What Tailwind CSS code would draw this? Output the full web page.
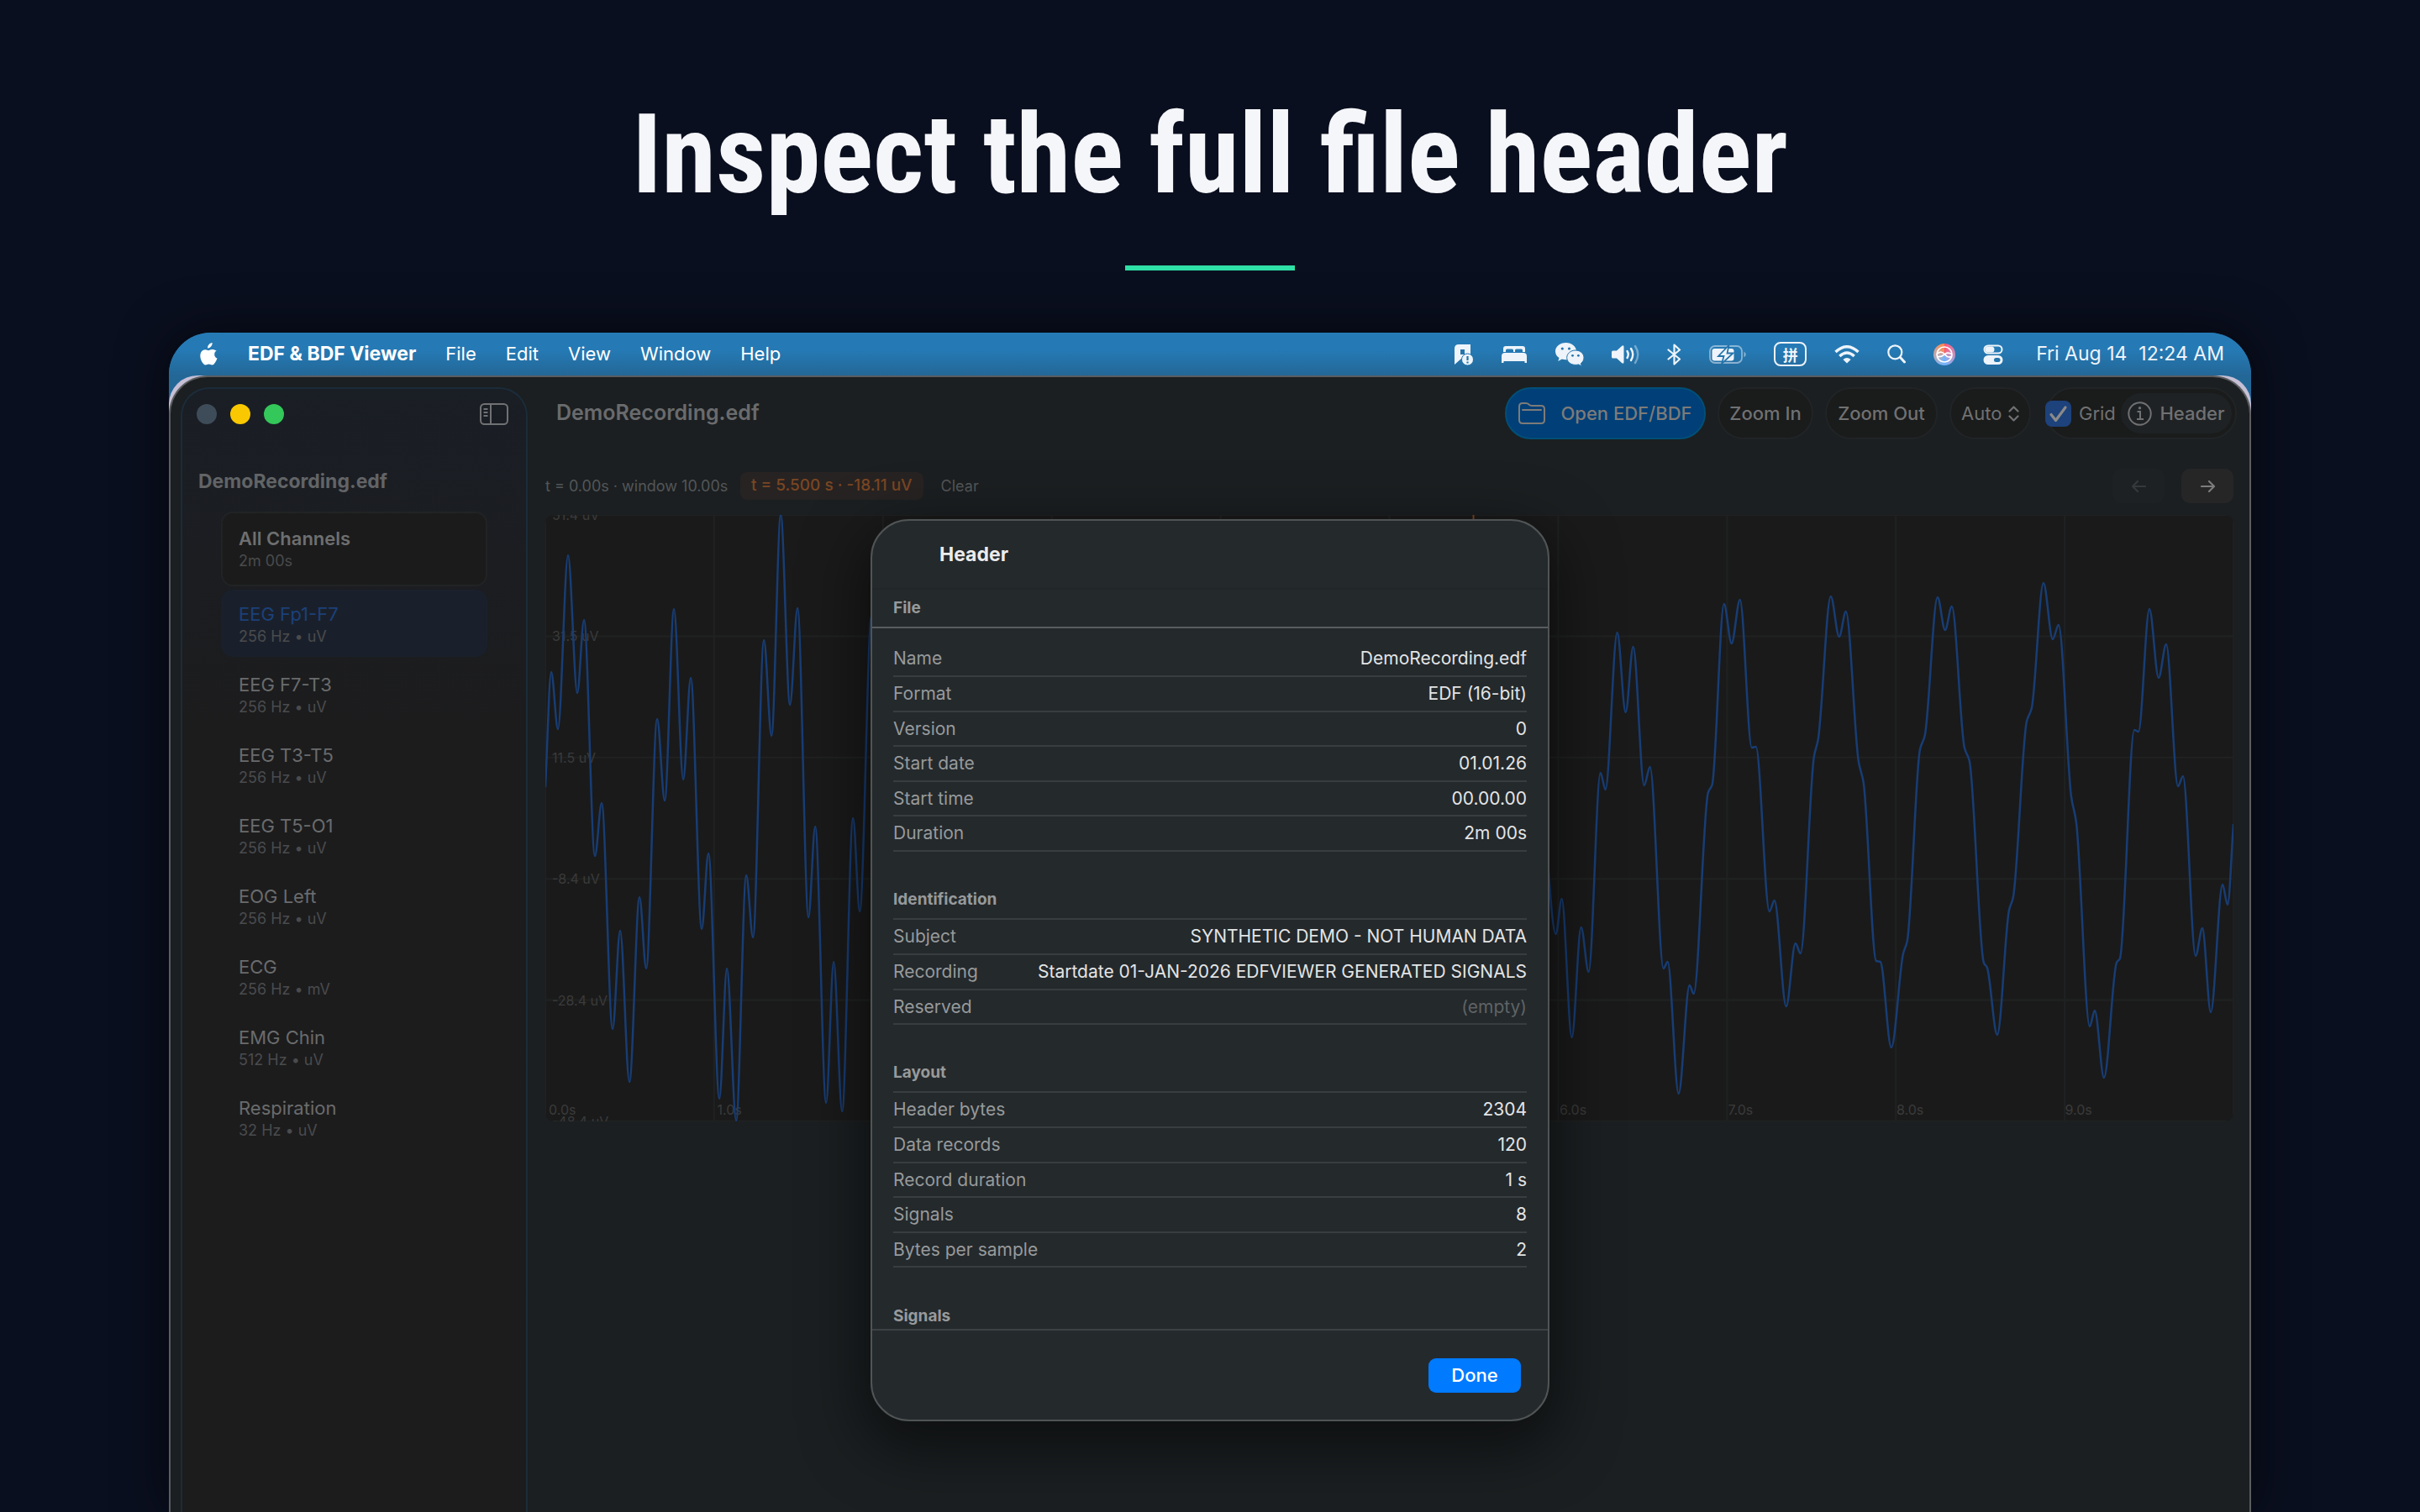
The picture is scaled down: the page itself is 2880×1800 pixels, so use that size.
<!DOCTYPE html>
<html lang="en">
  <head>
    <meta charset="UTF-8" />
    <meta name="viewport" content="width=device-width, initial-scale=1.0" />
    <title>EDF &amp; BDF Viewer</title>
    <script src="https://cdn.jsdelivr.net/npm/@tailwindcss/browser@4"></script>
  </head>
  <body
    class="bg-[#0a0f1f] font-['Inter','Noto_Sans_CJK_SC',sans-serif] h-screen overflow-hidden flex flex-col"
  >
    <!-- Headline -->
    <header class="h-[396px] shrink-0 flex flex-col items-center">
      <h1
        class="mt-[94px] h-[180px] flex items-center whitespace-nowrap font-['Roboto_Condensed','Roboto',sans-serif] font-bold text-[131px] text-[#f5f6fa]"
      >
        Inspect the full file header
      </h1>
      <div class="mt-[42px] w-[202px] h-[6px] bg-[#2ee0a5]"></div>
    </header>

    <!-- Desktop -->
    <div
      class="flex-1 min-h-0 mx-[201px] rounded-t-[50px] overflow-hidden bg-[#236797] shadow-[0_0_60px_rgba(0,0,0,0.6)] flex flex-col"
    >
      <!-- Menu bar -->
      <div
        class="h-[51px] shrink-0 flex items-center justify-between pl-9 pr-8 bg-linear-to-b from-[#257ab5] from-40% to-[#236797] text-[23px] text-white"
      >
        <nav class="flex items-center gap-[35px] text-[22px]">
          <svg class="w-[23px] h-[28px] fill-white" viewBox="0 0 23 28">
            <path d="M15.6 0c.2 1.700-.5 3.300-1.500 4.500-1 1.200-2.500 2-4 1.900-.2-1.600.6-3.200 1.500-4.200C12.600 1 14.300.1 15.600 0z" />
            <path d="M20.700 9.600c-1.600 1-2.500 2.500-2.500 4.300 0 2.100 1.200 3.900 3.300 4.700-.5 1.700-1.300 3.300-2.400 4.900-1 1.500-2.100 2.900-3.700 2.900-1.600 0-2.100-.9-3.900-.9-1.800 0-2.400.9-3.900 1-1.600 0-2.800-1.600-3.800-3.100C1.700 20.300.2 15.100 2.300 11.300 3.400 9.400 5.300 8.200 7.300 8.200c1.600 0 3 1 3.900 1s2.700-1.300 4.600-1.100c.8 0 3.300.3 4.900 1.500z" />
          </svg>
          <a href="#" class="text-[23px] font-bold">EDF &amp; BDF Viewer</a>
          <a href="#">File</a>
          <a href="#">Edit</a>
          <a href="#">View</a>
          <a href="#">Window</a>
          <a href="#">Help</a>
        </nav>
        <div class="flex items-center gap-[33px] text-[#eef4fa]">
          <svg class="w-[23px] h-[26px]" viewBox="0 0 23 26">
            <path d="M1 25V6Q1 1 6 1h14v12l-9 6-2-1z" fill="currentColor" />
            <path d="M8 7h5v6H8z" fill="#2574ab" />
            <circle cx="16.500" cy="19" r="7" fill="currentColor" stroke="#2574ab" />
            <path d="M16.500 15v5M16.500 21.500v2" stroke="#2574ab" stroke-width="2.200" />
          </svg>
          <svg class="w-[32px] h-[22px]" viewBox="0 0 32 22" fill="currentColor">
            <path d="M3 8V4q0-3 3-3h20q3 0 3 3v4h-3V6q0-1.500-1.500-1.500h-6Q17 4.500 17 6v2h-2V6q0-1.500-1.500-1.500h-6Q6 4.500 6 6v2z" />
            <path d="M1 21v-8q0-4 4-4h22q4 0 4 4v8h-2.500v-2h-25v2z" />
          </svg>
          <svg class="w-[34px] h-[28px]" viewBox="0 0 34 28">
            <path d="M12.500 0C5.600 0 0 4.500 0 10.200c0 3.200 1.700 6 4.500 7.900L3.300 22l4.500-2.400c1.500.4 3 .7 4.700.7C19.400 20.300 25 15.900 25 10.200S19.400 0 12.500 0z" fill="currentColor" />
            <path d="M24 9c-5.800 0-10.300 3.900-10.300 8.700S18.200 26.400 24 26.400c1.200 0 2.500-.2 3.600-.5l3.700 2-.9-3.300c2.200-1.600 3.600-4.100 3.600-6.900C34 12.900 29.700 9 24 9z" fill="currentColor" stroke="#2574ab" />
            <g fill="#2574ab">
              <circle cx="8.300" cy="7" r="1.600" /><circle cx="16.500" cy="7" r="1.600" />
              <circle cx="20.500" cy="15.300" r="1.400" /><circle cx="27.400" cy="15.300" r="1.400" />
            </g>
          </svg>
          <svg class="w-[33px] h-[24px]" viewBox="0 0 33 24" fill="none" stroke="currentColor" stroke-width="2.400" stroke-linecap="round">
            <path d="M0 9q0-1.500 1.500-1.500H6L12 2q2.500-2 2.500 1v18q0 3-2.500 1l-6-5.500H1.500Q0 16.500 0 15z" fill="currentColor" stroke="none" />
            <path d="M18.500 8q2.500 4 0 8" />
            <path d="M23 5q4.500 7 0 14" />
            <path d="M28 2q6.500 10 0 20" opacity=".4" />
          </svg>
          <svg class="w-[17px] h-[26px]" viewBox="0 0 17 26" fill="none" stroke="currentColor" stroke-width="2.200" stroke-linejoin="round" stroke-linecap="round">
            <path d="M1.500 7.500 15 18.500 8.500 24.500v-23L15 7.500 1.500 18.500" />
          </svg>
          <svg class="w-[44px] h-[22px]" viewBox="0 0 44 22">
            <rect x="1" y="1" width="38" height="20" rx="6" fill="none" stroke="currentColor" stroke-width="1.800" opacity=".5" />
            <path d="M41.500 7.500q4.500 3.500 0 7z" fill="currentColor" opacity=".5" />
            <rect x="3.500" y="4" width="26" height="14.500" rx="3" fill="currentColor" />
            <path d="M23.500 0 11 13h6.500L15 22 28.500 9.500h-7z" fill="currentColor" stroke="#2574ab" stroke-width="1.800" />
          </svg>
          <span
            class="w-[39px] h-[29px] flex items-center justify-center rounded-lg border-2 border-current text-[18px] leading-none font-bold font-['Noto_Sans_CJK_SC',sans-serif]"
            >拼</span
          >
          <svg class="w-[30px] h-[22px]" viewBox="0 0 30 22" fill="none" stroke="currentColor" stroke-width="3.400">
            <path d="M1.500 8q13.500-12.500 27 0" />
            <path d="M6.300 13q8.700-8 17.400 0" />
            <path d="M15 21.500l-4.600-4.600q4.600-4 9.200 0z" fill="currentColor" stroke="none" />
          </svg>
          <svg class="w-[22px] h-[23px]" viewBox="0 0 22 23" fill="none" stroke="currentColor" stroke-width="2.200" stroke-linecap="round">
            <circle cx="9.300" cy="9.300" r="8" />
            <path d="m15.500 15.500 5 5.500" stroke-width="3" />
          </svg>
          <span
            class="w-[26px] h-[26px] rounded-full bg-conic from-[#ff4f7a] via-[#6ab4ff] via-50% to-[#ff8a3c] flex items-center justify-center"
          >
            <svg class="w-[22px] h-[22px]" viewBox="0 0 22 22" fill="none" stroke="#fff" stroke-width="1.700">
              <circle cx="11" cy="11" r="9" />
              <path d="M2.500 10q5-4 9 1t8.500 2M2.500 13.500q5 1 8.500-2.500t8.500-.500" />
            </svg>
          </span>
          <svg class="w-[24px] h-[24px]" viewBox="0 0 24 24" fill="none" stroke="currentColor" stroke-width="2">
            <rect x="1.500" y="1.500" width="21" height="9" rx="4.500" />
            <rect x="3.500" y="3.500" width="9" height="5" rx="2.500" fill="currentColor" />
            <rect x="1.500" y="14" width="21" height="9" rx="4.500" fill="currentColor" />
            <rect x="13" y="16" width="7.500" height="5" rx="2.500" fill="#2574ab" stroke="none" />
          </svg>
          <p class="ml-1.5 flex gap-3.5"><span>Fri Aug 14</span><span>12:24 AM</span></p>
        </div>
      </div>

      <!-- Wallpaper, seen only in the window's corners -->
      <div class="flex-1 min-h-0 rounded-t-[34px] bg-[#c6bfd6] flex">
        <!-- App window -->
        <div
          class="relative flex-1 min-w-0 flex rounded-t-[46px] border-2 border-b-0 border-[#5a5c5e] bg-[#1b1f21]"
        >
          <!-- Sidebar -->
          <aside
            class="w-[413px] shrink-0 mt-3 ml-3 rounded-t-[34px] border-2 border-b-0 border-[#1b2c3a] bg-linear-to-b from-[#1a1e25] to-[#1c1c1d] to-30%"
          >
            <div class="h-[60px] pl-[17px] pr-[21px] flex items-center justify-between">
              <div class="flex gap-4">
                <button class="w-6 h-6 rounded-full bg-[#3d4c58]" aria-label="Close"></button>
                <button class="w-6 h-6 rounded-full bg-[#fac800]" aria-label="Minimize"></button>
                <button class="w-6 h-6 rounded-full bg-[#34c759]" aria-label="Zoom"></button>
              </div>
              <button aria-label="Toggle sidebar">
                <svg class="w-[34px] h-[26px]" viewBox="0 0 34 26" fill="none" stroke="#707173" stroke-width="2">
                  <rect x="1" y="1" width="32" height="24" rx="4.500" />
                  <path d="M13 1v24M4.500 7h5M4.500 11h5M4.500 15h5" />
                </svg>
              </button>
            </div>
            <h2 class="mt-9 pl-[19px] text-[23px] leading-7 font-bold text-[#626466]">
              DemoRecording.edf
            </h2>
            <ul id="channels" class="mt-[22px] mx-[46px] flex flex-col gap-1"></ul>
          </aside>

          <!-- Main column -->
          <main class="flex-1 min-w-0 mt-3 ml-[21px] mr-[19px]">
            <div class="h-[62px] -mr-1 pl-[13px] flex items-center justify-between text-[22px] text-[#707172]">
              <h1 class="text-[25px] font-semibold text-[#6a6b6d]">DemoRecording.edf</h1>
              <div class="flex items-center h-full gap-[14px]">
                <button
                  class="h-full w-[239px] flex items-center justify-center gap-[18px] rounded-full border-2 border-[#004f78] bg-[#003f77] font-medium text-[#7d7b79]"
                >
                  <svg class="w-[32px] h-[26px]" viewBox="0 0 32 26" fill="none" stroke="currentColor" stroke-width="2">
                    <path d="M1 21V5q0-4 4-4h4q2 0 3.500 1.500T16 4h11q4 0 4 4v13q0 4-4 4H5q-4 0-4-4zM5 9h22" stroke-linecap="round" />
                  </svg>
                  Open EDF/BDF
                </button>
                <button class="h-full w-[114px] rounded-full border-2 border-[#212426] bg-[#1a1b1b] font-medium">Zoom In</button>
                <button class="h-full w-[134px] rounded-full border-2 border-[#212426] bg-[#1a1b1b] font-medium">Zoom Out</button>
                <div
                  class="h-full w-[97px] px-3 flex items-center justify-between rounded-full border-2 border-[#212426] bg-[#1a1b1b]"
                >
                  <select class="appearance-none bg-transparent w-[52px]" aria-label="Scale">
                    <option>Auto</option>
                  </select>
                  <svg class="w-[13px] h-[19px] shrink-0" viewBox="0 0 13 19" fill="none" stroke="currentColor" stroke-width="2.200" stroke-linecap="round" stroke-linejoin="round">
                    <path d="M1.500 6.500l5-5 5 5M1.500 12.500l5 5 5-5" />
                  </svg>
                </div>
                <div
                  class="ml-1 h-full w-[227px] pr-1 flex items-center justify-between rounded-full border-2 border-[#212426] bg-[#1a1b1b]"
                >
                  <label class="-ml-[3px] flex items-center gap-[9px]">
                    <span class="relative w-[31px] h-[31px]">
                      <input type="checkbox" checked class="appearance-none block w-full h-full rounded-lg bg-[#1d427c]" />
                      <svg class="absolute inset-0" viewBox="0 0 31 31" fill="none" stroke="#8b8a88" stroke-width="3.200" stroke-linecap="round" stroke-linejoin="round">
                        <path d="M7 16.500l5.500 7L24 8" />
                      </svg>
                    </span>
                    Grid
                  </label>
                  <button class="h-12 w-[132px] flex items-center justify-center gap-[9px] rounded-full bg-[#1f2224] font-medium">
                    <svg class="w-[29px] h-[29px]" viewBox="0 0 29 29" fill="none" stroke="currentColor" stroke-width="2">
                      <circle cx="14.500" cy="14.500" r="13.200" />
                      <path d="M11.500 12h3.500v9M11 21h8" />
                      <circle cx="14.500" cy="7.800" r="1.700" fill="currentColor" stroke="none" />
                    </svg>
                    Header
                  </button>
                </div>
              </div>
            </div>

            <div class="mt-[35px] h-[41px] flex items-center text-[18px] text-[#535658]">
              <span class="w-[232px] whitespace-nowrap">t = 0.00s · window 10.00s</span>
              <span
                class="h-[33px] px-[13px] flex items-center rounded-lg bg-[#272322] text-[19px] font-medium text-[#7a4622] whitespace-nowrap"
                >t = 5.500 s · -18.11 uV</span
              >
              <button class="ml-[21px]">Clear</button>
              <div class="ml-auto flex gap-5">
                <button class="w-[62px] h-[41px] flex items-center justify-center rounded-[10px] bg-[#1e2123] text-[#36393b]" aria-label="Back">
                  <svg class="w-[17px] h-[14px]" viewBox="0 0 17 14" fill="none" stroke="currentColor" stroke-width="2.200" stroke-linecap="round" stroke-linejoin="round">
                    <path d="M16 7H1M7 1 1 7l6 6" />
                  </svg>
                </button>
                <button class="w-[62px] h-[41px] flex items-center justify-center rounded-[10px] bg-[#262627] text-[#7c7c7c]" aria-label="Forward">
                  <svg class="w-[17px] h-[14px]" viewBox="0 0 17 14" fill="none" stroke="currentColor" stroke-width="2.200" stroke-linecap="round" stroke-linejoin="round">
                    <path d="M1 7h15M10 1l6 6-6 6" />
                  </svg>
                </button>
              </div>
            </div>

            <!-- Trace -->
            <div class="relative mt-[14px] h-[722px] rounded-[10px] overflow-hidden bg-[#1a1a1a] text-[16px] text-[#3a3b3b]">
              <svg class="absolute inset-0 w-full h-full" viewBox="0 0 2008 722" preserveAspectRatio="none" fill="none">
                <g id="grid" stroke="#202222" stroke-width="2"></g>
              </svg>
              <div class="absolute inset-0 pl-2 flex flex-col justify-between">
                <span class="h-0 leading-0">51.4 uV</span>
                <span class="h-0 leading-0">31.5 uV</span>
                <span class="h-0 leading-0">11.5 uV</span>
                <span class="h-0 leading-0">-8.4 uV</span>
                <span class="h-0 leading-0">-28.4 uV</span>
                <span class="h-0 leading-0">-48.4 uV</span>
              </div>
              <div class="absolute inset-x-0 bottom-1 pl-1 grid grid-cols-10 leading-5">
                <span>0.0s</span><span>1.0s</span><span>2.0s</span><span>3.0s</span><span>4.0s</span>
                <span>5.0s</span><span>6.0s</span><span>7.0s</span><span>8.0s</span><span>9.0s</span>
              </div>
              <svg class="absolute inset-0 w-full h-full" viewBox="0 0 2008 722" preserveAspectRatio="none" fill="none">
                <path id="trace" stroke="#183d74" stroke-width="2.500" />
                <path d="M1104 0V722" stroke="#7a4622" stroke-width="2" />
              </svg>
            </div>
          </main>

          <!-- Header sheet -->
          <section
            class="absolute top-[169px] left-1/2 -translate-x-1/2 w-[808px] h-[1074px] flex flex-col rounded-[46px] border-2 border-[#505455] bg-[#24292c] shadow-[0_24px_70px_10px_rgba(0,0,0,0.5)] text-[21px] text-[#979a9b]"
            role="dialog"
            aria-label="Header"
          >
            <h2 class="h-[82px] shrink-0 pl-20 flex items-center border-b-2 border-[#212629] text-[23px] font-bold text-[#ececec]">
              Header
            </h2>
            <div class="flex-1 min-h-0 overflow-hidden">
              <h3 class="h-[46px] px-[25px] flex items-center border-b-2 border-[#595d5f] text-[19px] font-bold">File</h3>
              <div class="px-[25px] pt-4">
                <table class="w-full" data-section="file"></table>
                <h3 class="mt-9 h-[45px] flex items-center border-b-2 border-[#383d40] text-[19px] font-bold">Identification</h3>
                <table class="w-full" data-section="identification"></table>
                <h3 class="mt-9 h-[45px] flex items-center border-b-2 border-[#383d40] text-[19px] font-bold">Layout</h3>
                <table class="w-full" data-section="layout"></table>
                <h3 class="mt-9 h-[45px] flex items-center text-[19px] font-bold">Signals</h3>
              </div>
            </div>
            <div class="h-[108px] shrink-0 pr-8 flex items-center justify-end border-t-2 border-[#3d4144]">
              <button class="w-[110px] h-[41px] rounded-[9px] bg-[#007aff] text-[22px] font-medium text-white">Done</button>
            </div>
          </section>
        </div>
      </div>
    </div>

    <script>
      const channels = [
        ["EEG Fp1-F7", "256 Hz • uV"],
        ["EEG F7-T3", "256 Hz • uV"],
        ["EEG T3-T5", "256 Hz • uV"],
        ["EEG T5-O1", "256 Hz • uV"],
        ["EOG Left", "256 Hz • uV"],
        ["ECG", "256 Hz • mV"],
        ["EMG Chin", "512 Hz • uV"],
        ["Respiration", "32 Hz • uV"],
      ];

      const sections = {
        file: [
          ["Name", "DemoRecording.edf"],
          ["Format", "EDF (16-bit)"],
          ["Version", "0"],
          ["Start date", "01.01.26"],
          ["Start time", "00.00.00"],
          ["Duration", "2m 00s"],
        ],
        identification: [
          ["Subject", "SYNTHETIC DEMO - NOT HUMAN DATA"],
          ["Recording", "Startdate 01-JAN-2026 EDFVIEWER GENERATED SIGNALS"],
          ["Reserved", ""],
        ],
        layout: [
          ["Header bytes", "2304"],
          ["Data records", "120"],
          ["Record duration", "1 s"],
          ["Signals", "8"],
          ["Bytes per sample", "2"],
        ],
      };

      // Sidebar list
      document.getElementById("channels").innerHTML =
        `<li><button class="w-full h-[89px] px-[19px] flex flex-col justify-center rounded-[14px] border-2 border-[#212324] bg-[#1b1b1b] text-left">
          <span class="text-[22px] leading-7 font-semibold text-[#6e6f70]">All Channels</span>
          <span class="text-[18px] leading-[26px] text-[#4a4b4c]">2m 00s</span>
        </button></li>` +
        channels
          .map(
            ([name, info], i) =>
              `<li><button class="w-full h-20 px-[21px] pt-1 flex flex-col justify-center rounded-[14px] text-left ${i === 0 ? "bg-[#1a202b]" : ""}">
                <span class="text-[22px] leading-7 ${i === 0 ? "text-[#1b4079]" : "text-[#6a6b6c]"}">${name}</span>
                <span class="text-[18px] leading-[26px] text-[#4a4b4d]">${info}</span>
              </button></li>`
          )
          .join("");

      // Header tables
      document.querySelectorAll("[data-section]").forEach((table) => {
        table.innerHTML = sections[table.dataset.section]
          .map(
            ([label, value]) =>
              `<tr class="odd:h-[41px] even:h-[42px] border-b-2 border-[#383d40]">
                <th class="text-left font-normal">${label}</th>
                <td class="text-right ${value ? "text-[#e3e4e4]" : "text-[#5f6365]"}">${value || "(empty)"}</td>
              </tr>`
          )
          .join("");
      });

      // Grid lines, one per second and one per 20 uV
      let lines = "";
      for (let i = 0; i <= 10; i++) lines += `<path d="M${i * 200.8} 0V722"/>`;
      for (let i = 0; i <= 5; i++) lines += `<path d="M0 ${i * 144.4}H2008"/>`;
      document.getElementById("grid").innerHTML = lines;

      // Turning points of the signal
      const pts = [
        [0, 324], [7, 187], [15, 255], [27, 48], [38, 212], [46, 125], [59, 406], [67, 343],
        [80, 612], [89, 495], [100, 675], [112, 455], [120, 540], [133, 243], [142, 340], [153, 112],
        [164, 315], [173, 194], [186, 493], [194, 403], [207, 695], [216, 540], [227, 721], [239, 429],
        [247, 503], [260, 149], [269, 263], [280, 0], [291, 226], [300, 111], [313, 479], [321, 371],
        [334, 700], [343, 532], [353, 710], [366, 361], [374, 472], [388, 120], [396, 240], [407, 20],
        [460, 690], [533, 40], [586, 690], [660, 60], [713, 680], [787, 70], [840, 680], [913, 60],
        [967, 690], [1040, 80], [1093, 660], [1165, 100], [1184, 293],
        [1202, 499], [1209, 457], [1221, 622], [1232, 491], [1241, 544], [1255, 307], [1261, 327],
        [1275, 140], [1285, 235], [1294, 157], [1307, 322], [1314, 300], [1330, 540], [1335, 532],
        [1348, 689], [1361, 560], [1366, 570], [1383, 331], [1388, 321], [1402, 106], [1411, 153],
        [1421, 101], [1435, 277], [1440, 276], [1456, 472], [1462, 459], [1476, 585], [1487, 510],
        [1493, 522], [1509, 288], [1514, 267], [1529, 97], [1539, 145], [1547, 115], [1562, 293],
        [1568, 319], [1583, 531], [1588, 532], [1601, 634], [1615, 523], [1620, 507], [1635, 280],
        [1641, 262], [1656, 98], [1665, 137], [1673, 109], [1688, 277], [1694, 293], [1711, 533],
        [1715, 539], [1727, 619], [1741, 471], [1746, 455], [1762, 246], [1768, 230], [1782, 81],
        [1793, 148], [1800, 131], [1815, 335], [1821, 366], [1837, 609], [1843, 590], [1854, 670],
        [1869, 533], [1873, 528], [1890, 256], [1895, 258], [1908, 112], [1919, 194], [1928, 154],
        [1942, 323], [1948, 311], [1963, 525], [1971, 492], [1981, 592], [1995, 440], [2001, 464],
        [2008, 368],
      ];

      // Monotone cubic through the points
      const slope = pts.slice(1).map((p, i) => (p[1] - pts[i][1]) / (p[0] - pts[i][0]));
      const tangent = pts.map((p, i) => {
        const a = slope[i - 1];
        const b = slope[i];
        if (a === undefined) return b;
        if (b === undefined) return a;
        return a * b <= 0 ? 0 : (2 * a * b) / (a + b);
      });
      let d = `M${pts[0]}`;
      for (let i = 1; i < pts.length; i++) {
        const [x0, y0] = pts[i - 1];
        const [x1, y1] = pts[i];
        const h = (x1 - x0) / 3;
        d += `C${x0 + h} ${y0 + tangent[i - 1] * h} ${x1 - h} ${y1 - tangent[i] * h} ${x1} ${y1}`;
      }
      document.getElementById("trace").setAttribute("d", d);
    </script>
  </body>
</html>
